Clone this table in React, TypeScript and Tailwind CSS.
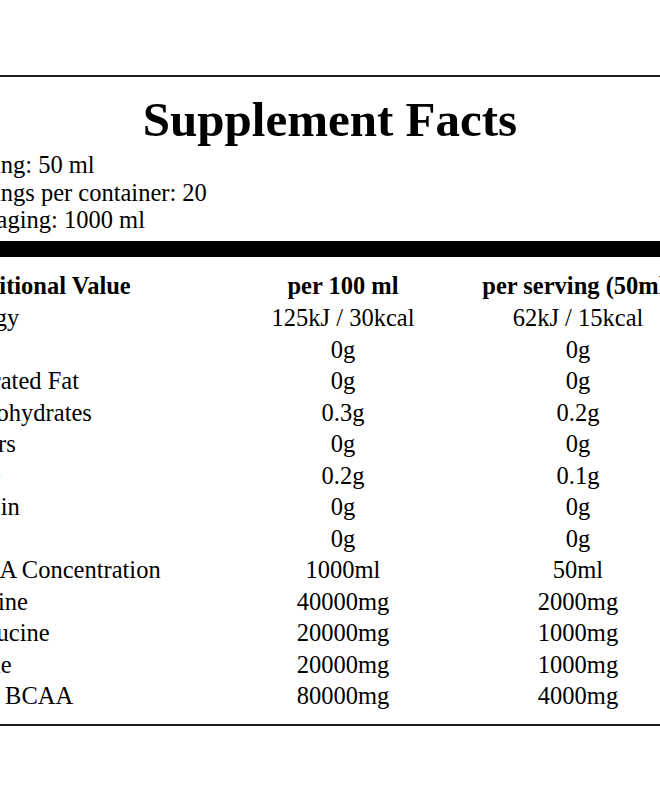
import React from "react";

const rows: [string, string, string][] = [
  ["Energy", "125kJ / 30kcal", "62kJ / 15kcal"],
  ["Fat", "0g", "0g"],
  ["Saturated Fat", "0g", "0g"],
  ["Carbohydrates", "0.3g", "0.2g"],
  ["Sugars", "0g", "0g"],
  ["Fibre", "0.2g", "0.1g"],
  ["Protein", "0g", "0g"],
  ["Salt", "0g", "0g"],
  ["BCAA Concentration", "1000ml", "50ml"],
  ["Leucine", "40000mg", "2000mg"],
  ["Isoleucine", "20000mg", "1000mg"],
  ["Valine", "20000mg", "1000mg"],
  ["Total BCAA", "80000mg", "4000mg"],
];

export default function App() {
  return (
    <div
      className="w-[660px] h-[800px] overflow-hidden bg-white text-black"
      style={{ fontFamily: '"Liberation Serif", "Times New Roman", serif' }}
    >
      <div className="ml-[-62px] mt-[75px] w-[784px] border-2 border-[#1c1c1c] pl-[9px] pb-[12.5px] pt-[15px]">
        <h1 className="text-center text-[49px] font-bold leading-[56px] -ml-[9px]">
          Supplement Facts
        </h1>
        <div className="mt-[3px] text-[24.5px] leading-[27.5px]">
          <div>Serving: 50 ml</div>
          <div>Servings per container: 20</div>
          <div>Packaging: 1000 ml</div>
        </div>
        <div className="mt-[7.5px] -ml-[9px] h-[16px] bg-black" />
        <div className="mt-[12px] grid grid-cols-[276.5px_235px_235px] text-[24.5px]">
          <div className="font-bold leading-[33px] whitespace-nowrap">Nutritional Value</div>
          <div className="font-bold leading-[33px] text-center whitespace-nowrap">per 100 ml</div>
          <div className="font-bold leading-[33px] text-center whitespace-nowrap">per serving (50ml)</div>
          {rows.map(([a, b, c]) => (
            <React.Fragment key={a}>
              <div className="leading-[31.5px] whitespace-nowrap">{a}</div>
              <div className="leading-[31.5px] text-center whitespace-nowrap">{b}</div>
              <div className="leading-[31.5px] text-center whitespace-nowrap">{c}</div>
            </React.Fragment>
          ))}
        </div>
      </div>
    </div>
  );
}
